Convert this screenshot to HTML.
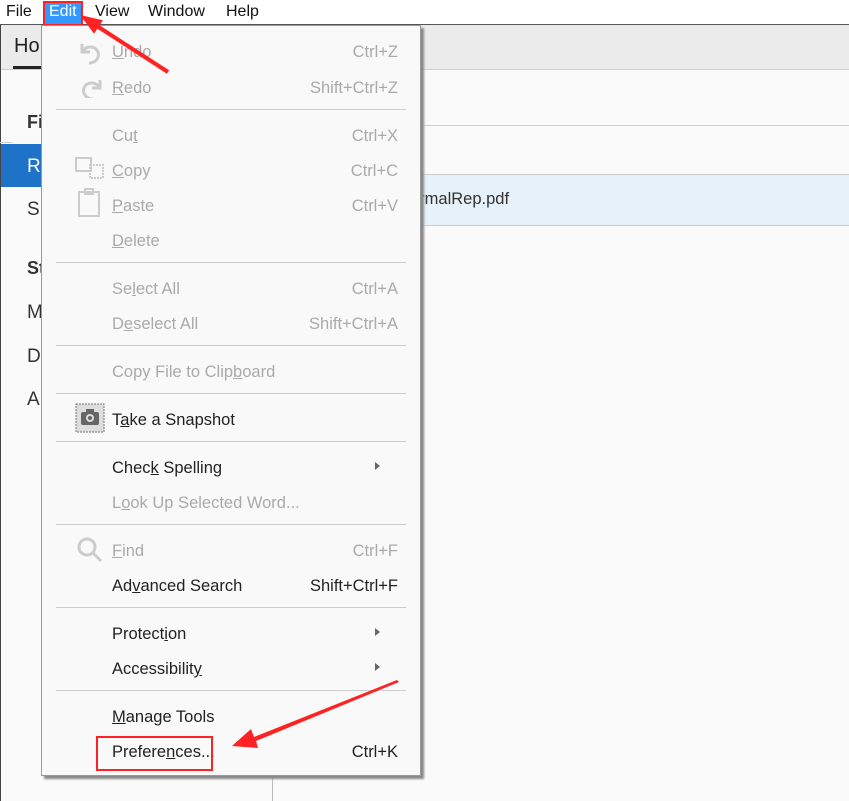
<!DOCTYPE html><html><head><style>
body{margin:0;width:849px;height:801px;overflow:hidden;background:#fafafa;font-family:"Liberation Sans",sans-serif;position:relative}
.a{position:absolute}
.mb{top:0;left:0;width:849px;height:24px;background:#fff;border-bottom:1px solid #555}
.mb span{position:absolute;top:3px;font-size:16px;color:#111}
.menu{left:41px;top:25px;width:378px;height:749px;background:#f9f9f9;border:1px solid #999;box-shadow:3px 3px 2px #888}
.it{position:absolute;left:70px;font-size:16.5px;color:#222;white-space:nowrap;margin-top:2px}
.d{color:#aaa}
.sc{position:absolute;right:22px;font-size:16.5px}
.sep{position:absolute;left:14px;width:350px;height:1px;background:#ccc}
.ar{position:absolute;left:333px;width:0;height:0;border-left:5px solid #666;border-top:4px solid transparent;border-bottom:4px solid transparent}
u{text-decoration:underline}
</style></head><body>
<div class="a mb"><span style="left:6px">File</span>
<div class="a" style="left:43px;top:1px;width:36px;height:21px;background:#3399ff;border:2px solid #f22"></div>
<span style="left:49px;color:#fff">Edit</span><span style="left:95px">View</span><span style="left:148px">Window</span><span style="left:226px">Help</span></div>
<div class="a" style="left:0;top:25px;width:1px;height:776px;background:#444"></div>
<div class="a" style="left:1px;top:25px;width:848px;height:44px;background:#ebebeb;border-bottom:1px solid #ccc"></div>
<div class="a" style="left:14px;top:35px;font-size:20px;color:#222">Ho</div>
<div class="a" style="left:13px;top:66px;width:28px;height:3px;background:#222"></div>
<div class="a" style="left:1px;top:70px;width:40px;height:731px;background:#fafafa"></div>
<div class="a" style="left:1px;top:144px;width:40px;height:43px;background:#1e72c8"></div>
<div class="a" style="left:27px;top:112px;font-size:18px;font-weight:bold;color:#333">Fi</div>
<div class="a" style="left:27px;top:156px;font-size:19px;color:#fff">R</div>
<div class="a" style="left:27px;top:199px;font-size:19px;color:#333">S</div>
<div class="a" style="left:27px;top:258px;font-size:18px;font-weight:bold;color:#333">St</div>
<div class="a" style="left:27px;top:302px;font-size:19px;color:#333">M</div>
<div class="a" style="left:27px;top:346px;font-size:19px;color:#333">D</div>
<div class="a" style="left:27px;top:389px;font-size:19px;color:#333">A</div>
<div class="a" style="left:420px;top:125px;width:429px;height:1px;background:#ccc"></div>
<div class="a" style="left:420px;top:174px;width:429px;height:50px;background:#e7f1fa;border-top:1px solid #ccc;border-bottom:1px solid #ccc"></div>
<div class="a" style="left:410px;top:190px;font-size:16.5px;color:#333">ormalRep.pdf</div>
<div class="a" style="left:272px;top:775px;width:1px;height:26px;background:#bbb"></div>
<div class="a" style="left:0;top:142px;width:12px;height:1px;background:#ccc"></div>
<div class="a menu">
<svg class="a" style="left:34px;top:12px" width="30" height="60" viewBox="0 0 30 60" fill="none" stroke="#ccc" stroke-width="3"><path d="M6 6v8h8M7 13c3-5 12-6 15 1 2 6-3 11-9 11"/><path d="M24 42v8h-8M23 49c-3-5-12-6-15 1-2 6 3 11 9 11"/></svg>
<svg class="a" style="left:32px;top:130px" width="32" height="70" fill="none" stroke="#ccc" stroke-width="2"><rect x="2" y="2" width="15" height="13"/><rect x="16" y="9" width="13" height="13" stroke-dasharray="2 1"/><rect x="5" y="36" width="20" height="24"/><rect x="11" y="33" width="8" height="5"/></svg>
<svg class="a" style="left:33px;top:377px" width="30" height="30"><rect x="1" y="1" width="28" height="28" fill="#ddd" stroke="#777" stroke-dasharray="2 1"/><rect x="6" y="9" width="18" height="13" rx="2" fill="#666"/><rect x="11" y="6" width="8" height="4" fill="#666"/><circle cx="15" cy="15" r="4" fill="#ddd"/><circle cx="15" cy="15" r="2" fill="#666"/></svg>
<svg class="a" style="left:34px;top:510px" width="28" height="28" fill="none" stroke="#ccc" stroke-width="3"><circle cx="11" cy="11" r="8"/><path d="M17 17l8 8"/></svg>
<div class="it d" style="top:15px;width:286px"><u>U</u>ndo<span class="sc" style="right:0">Ctrl+Z</span></div>
<div class="it d" style="top:51px;width:286px"><u>R</u>edo<span class="sc" style="right:0">Shift+Ctrl+Z</span></div>
<div class="sep" style="top:83px"></div>
<div class="it d" style="top:99px;width:286px">Cu<u>t</u><span class="sc" style="right:0">Ctrl+X</span></div>
<div class="it d" style="top:134px;width:286px"><u>C</u>opy<span class="sc" style="right:0">Ctrl+C</span></div>
<div class="it d" style="top:169px;width:286px"><u>P</u>aste<span class="sc" style="right:0">Ctrl+V</span></div>
<div class="it d" style="top:204px"><u>D</u>elete</div>
<div class="sep" style="top:236px"></div>
<div class="it d" style="top:252px;width:286px">Se<u>l</u>ect All<span class="sc" style="right:0">Ctrl+A</span></div>
<div class="it d" style="top:287px;width:286px">D<u>e</u>select All<span class="sc" style="right:0">Shift+Ctrl+A</span></div>
<div class="sep" style="top:319px"></div>
<div class="it d" style="top:335px">Copy File to Clip<u>b</u>oard</div>
<div class="sep" style="top:367px"></div>
<div class="it" style="top:383px">T<u>a</u>ke a Snapshot</div>
<div class="sep" style="top:415px"></div>
<div class="it" style="top:431px">Chec<u>k</u> Spelling</div><div class="ar" style="top:436px"></div>
<div class="it d" style="top:466px">L<u>o</u>ok Up Selected Word...</div>
<div class="sep" style="top:498px"></div>
<div class="it d" style="top:514px;width:286px"><u>F</u>ind<span class="sc" style="right:0">Ctrl+F</span></div>
<div class="it" style="top:549px;width:286px">Ad<u>v</u>anced Search<span class="sc" style="right:0">Shift+Ctrl+F</span></div>
<div class="sep" style="top:581px"></div>
<div class="it" style="top:597px">Protect<u>i</u>on</div><div class="ar" style="top:602px"></div>
<div class="it" style="top:632px">Accessibilit<u>y</u></div><div class="ar" style="top:637px"></div>
<div class="sep" style="top:664px"></div>
<div class="it" style="top:680px"><u>M</u>anage Tools</div>
<div class="it" style="top:715px;width:286px">Prefere<u>n</u>ces...<span class="sc" style="right:0">Ctrl+K</span></div>
<div class="a" style="left:54px;top:710px;width:113px;height:31px;border:2px solid #f22"></div>
</div>
<svg class="a" style="left:0;top:0" width="849" height="801">
<polygon points="80,15 102.9,20.3 99.6,25.3 169.1,70.3 166.9,73.7 97.4,28.7 94.1,33.7" fill="#f22"/>
<polygon points="397,680 254,737 251,729 232,746 258,748 256,741 399,682" fill="#f22"/>
</svg>
</body></html>
